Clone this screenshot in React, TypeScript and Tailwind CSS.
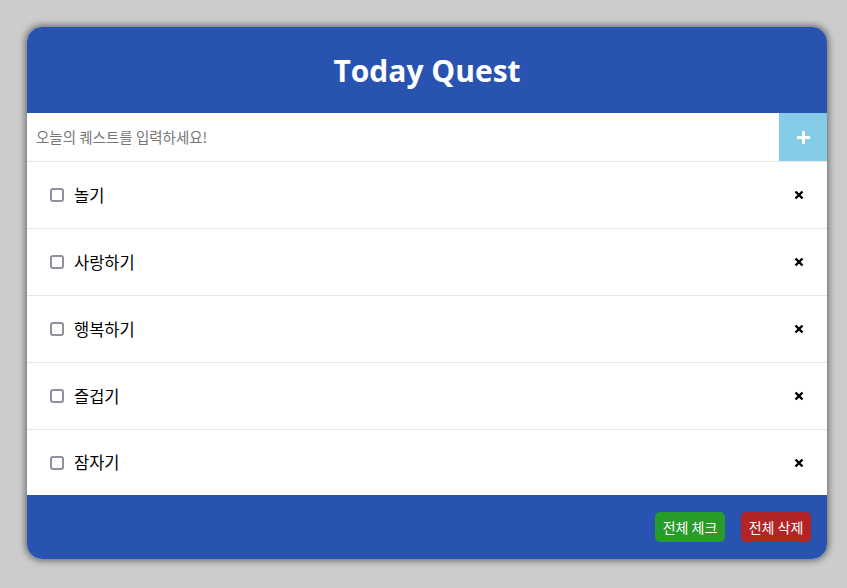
import { useState } from "react";

type Quest = { id: number; text: string; done: boolean };

const initial: Quest[] = [
  { id: 1, text: "놀기", done: false },
  { id: 2, text: "사랑하기", done: false },
  { id: 3, text: "행복하기", done: false },
  { id: 4, text: "즐겁기", done: false },
  { id: 5, text: "잠자기", done: false },
];

const kr = "font-['Noto_Sans_CJK_KR','Noto_Sans',sans-serif]";

export default function App() {
  const [quests, setQuests] = useState<Quest[]>(initial);
  const [input, setInput] = useState("");

  const add = () => {
    if (!input.trim()) return;
    setQuests((prev) => [...prev, { id: Date.now(), text: input, done: false }]);
    setInput("");
  };

  return (
    <div className="min-h-[588px] w-full bg-[#cccccc] pt-[27px] pl-[27px]">
      <div className="w-[800px] overflow-hidden rounded-[15px] bg-white shadow-[0_0_6px_2px_rgba(0,0,0,0.45)]">
        <header className="flex h-[86px] items-center justify-center bg-[#2853b0]">
          <h1 className="font-['Open_Sans',sans-serif] text-[30px] font-bold text-white">
            Today Quest
          </h1>
        </header>

        <section className="flex h-[49px] border-b border-[#e6e6e6]">
          <input
            className={`${kr} grow bg-transparent pl-[9px] text-[14.5px] text-black outline-none placeholder:text-[#777777]`}
            placeholder="오늘의 퀘스트를 입력하세요!"
            value={input}
            onChange={(e) => setInput(e.target.value)}
            onKeyDown={(e) => e.key === "Enter" && add()}
          />
          <button
            className="flex h-[48px] w-[48px] items-center justify-center bg-[#84cce8]"
            onClick={add}
          >
            <svg width="15" height="15" viewBox="0 0 15 15">
              <path d="M7.5 1v13M1 7.5h13" stroke="white" strokeWidth="3" />
            </svg>
          </button>
        </section>

        <ul>
          {quests.map((q, i) => (
            <li
              key={q.id}
              className={`flex items-center pl-[23px] pr-[23px] ${
                i < quests.length - 1 ? "h-[67px] border-b border-[#e6e6e6]" : "h-[65px]"
              }`}
            >
              <input
                type="checkbox"
                className="m-0 h-[14px] w-[14px] appearance-none rounded-[3px] border-2 border-[#8f8f9d] bg-white checked:bg-[#2853b0]"
                checked={q.done}
                onChange={() =>
                  setQuests((prev) =>
                    prev.map((p) => (p.id === q.id ? { ...p, done: !p.done } : p))
                  )
                }
              />
              <span className={`${kr} ml-[10px] grow text-[16.5px] text-black`}>{q.text}</span>
              <button
                onClick={() => setQuests((prev) => prev.filter((p) => p.id !== q.id))}
              >
                <svg width="10" height="10" viewBox="0 0 10 10">
                  <path d="M1.5 1.5l7 7M8.5 1.5l-7 7" stroke="black" strokeWidth="2.4" />
                </svg>
              </button>
            </li>
          ))}
        </ul>

        <footer className="flex h-[64px] items-center justify-end gap-[16px] bg-[#2853b0] pr-[16px]">
          <button
            className={`${kr} h-[30px] w-[70px] rounded-[5px] bg-[#279c29] text-[14px] text-white`}
            onClick={() => setQuests((prev) => prev.map((p) => ({ ...p, done: true })))}
          >
            전체 체크
          </button>
          <button
            className={`${kr} h-[30px] w-[70px] rounded-[5px] bg-[#b32426] text-[14px] text-white`}
            onClick={() => setQuests([])}
          >
            전체 삭제
          </button>
        </footer>
      </div>
    </div>
  );
}
